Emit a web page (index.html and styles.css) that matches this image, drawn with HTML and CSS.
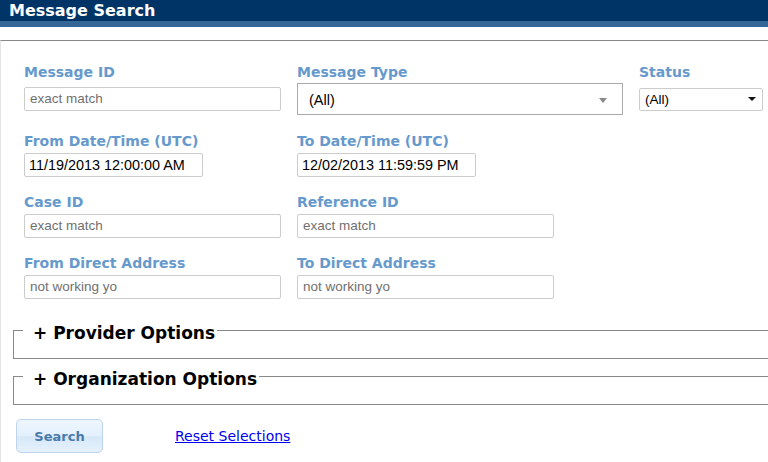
FILE: index.html
```html
<!DOCTYPE html>
<html>
<head>
<meta charset="utf-8">
<link rel="stylesheet" href="styles.css">
</head>
<body>
<div class="header">
  <div class="header-bar"><h1 class="title">Message Search</h1></div>
  <div class="header-band"></div>
</div>
<div class="content">
  <div class="grid">
    <div class="field">
      <div class="label">Message ID</div>
      <div class="area area-tall"><div class="input placeholder wide">exact match</div></div>
    </div>
    <div class="field">
      <div class="label">Message Type</div>
      <div class="area area-tall">
        <div class="select select-big"><span class="sel-text">(All)</span><span class="arrow arrow-gray"></span></div>
      </div>
    </div>
    <div class="field">
      <div class="label">Status</div>
      <div class="area area-tall">
        <div class="select select-small"><span class="sel-text">(All)</span><span class="arrow arrow-black"></span></div>
      </div>
    </div>

    <div class="field">
      <div class="label">From Date/Time (UTC)</div>
      <div class="area"><div class="input date">11/19/2013 12:00:00 AM</div></div>
    </div>
    <div class="field">
      <div class="label">To Date/Time (UTC)</div>
      <div class="area"><div class="input date">12/02/2013 11:59:59 PM</div></div>
    </div>
    <div class="field"></div>

    <div class="field">
      <div class="label">Case ID</div>
      <div class="area"><div class="input placeholder wide">exact match</div></div>
    </div>
    <div class="field">
      <div class="label">Reference ID</div>
      <div class="area"><div class="input placeholder wide">exact match</div></div>
    </div>
    <div class="field"></div>

    <div class="field">
      <div class="label">From Direct Address</div>
      <div class="area"><div class="input placeholder wide">not working yo</div></div>
    </div>
    <div class="field">
      <div class="label">To Direct Address</div>
      <div class="area"><div class="input placeholder wide">not working yo</div></div>
    </div>
    <div class="field"></div>
  </div>

  <fieldset class="group group-first"><legend class="legend">+ Provider Options</legend></fieldset>
  <fieldset class="group"><legend class="legend">+ Organization Options</legend></fieldset>

  <div class="actions">
    <button class="btn">Search</button>
    <a class="reset" href="#">Reset Selections</a>
  </div>
</div>
</body>
</html>
```

FILE: styles.css
```css
html, body {
  margin: 0;
  padding: 0;
  overflow: hidden;
  background: #ffffff;
}

.header-bar {
  height: 21px;
  background: #003366;
  display: flex;
  align-items: flex-start;
}

.title {
  margin: 0;
  padding: 1px 0 0 9px;
  font-family: "DejaVu Sans", Verdana, sans-serif;
  font-weight: bold;
  font-size: 16px;
  line-height: 19px;
  color: #ffffff;
  white-space: nowrap;
}

.header-band {
  height: 6px;
  background: #356698;
  border-bottom: 13px solid #ffffff;
}

.content {
  border-top: 1px solid #888888;
  border-left: 1px solid #e4e4e4;
  padding-top: 23px;
  height: 430px;
  box-sizing: border-box;
  overflow: hidden;
}

.grid {
  display: grid;
  grid-template-columns: 257px 326px 124px;
  column-gap: 16px;
  row-gap: 17px;
  padding-left: 23px;
}

.field {
  display: flex;
  flex-direction: column;
}

.label {
  font-family: "DejaVu Sans", Verdana, sans-serif;
  font-weight: bold;
  font-size: 14px;
  line-height: 16px;
  color: #6699cc;
  margin-bottom: 4px;
  white-space: nowrap;
}

.area {
  display: flex;
  align-items: center;
}

.area-tall {
  height: 32px;
  margin-top: -1px;
  margin-bottom: 1px;
}

.input {
  height: 24px;
  box-sizing: border-box;
  border: 1px solid #cccccc;
  border-radius: 2px;
  padding: 0 5px;
  font-family: "Liberation Sans", Arial, sans-serif;
  font-size: 13.5px;
  line-height: 22px;
  white-space: nowrap;
  background: #ffffff;
}

.wide {
  width: 257px;
}

.placeholder {
  color: #707070;
}

.date {
  width: 179px;
  color: #000000;
  font-size: 14.4px;
  padding-left: 4px;
}

.select {
  box-sizing: border-box;
  display: flex;
  align-items: center;
  justify-content: space-between;
  font-family: "Liberation Sans", Arial, sans-serif;
  color: #000000;
  background: #ffffff;
}

.select-big {
  width: 326px;
  height: 32px;
  border: 1px solid #a9a9a9;
  padding: 2px 15px 0 11px;
  font-size: 14.5px;
}

.select-small {
  width: 124px;
  height: 23px;
  border: 1px solid #cccccc;
  border-radius: 2px;
  padding: 0 6px 0 5px;
  font-size: 13.5px;
}

.arrow {
  width: 0;
  height: 0;
  border-left: 4px solid transparent;
  border-right: 4px solid transparent;
}

.arrow-gray {
  border-top: 5px solid #8a8a8a;
}

.arrow-black {
  border-top: 4px solid #111111;
}

.group {
  box-sizing: border-box;
  margin: 4px 0 0 12px;
  padding: 0 0 15px 9px;
  border: 1px solid #888888;
  border-right: 0;
  min-width: 0;
}

.group-first {
  margin-top: 18px;
}

.legend {
  padding: 6px 2px 0 10px;
  font-family: "DejaVu Sans", Verdana, sans-serif;
  font-weight: bold;
  font-size: 17px;
  line-height: 20px;
  color: #000000;
  white-space: nowrap;
}

.actions {
  display: flex;
  align-items: center;
  padding-left: 15px;
  margin-top: 14px;
}

.btn {
  width: 87px;
  height: 34px;
  box-sizing: border-box;
  border: 1px solid #bcd4ec;
  border-radius: 5px;
  background: linear-gradient(#eef6fe 0%, #e3f0fc 50%, #d6e8f8 52%, #e6f1fc 100%);
  font-family: "DejaVu Sans", Verdana, sans-serif;
  font-weight: bold;
  font-size: 13px;
  color: #4a7aab;
  padding: 0;
  margin: 0;
}

.reset {
  margin-left: 72px;
  font-family: "DejaVu Sans", Verdana, sans-serif;
  font-size: 14px;
  color: #0000ee;
  text-decoration: underline;
  white-space: nowrap;
}
```
